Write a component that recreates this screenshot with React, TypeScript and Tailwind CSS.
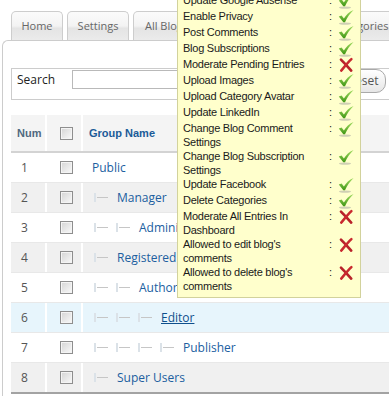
import React from "react";

interface Group {
  num: number;
  name: string;
  level: number;
  hover?: boolean;
}

interface Perm {
  lines: string[];
  allowed: boolean;
}

const groups: Group[] = [
  { num: 1, name: "Public", level: 0 },
  { num: 2, name: "Manager", level: 1 },
  { num: 3, name: "Administrator", level: 2 },
  { num: 4, name: "Registered", level: 1 },
  { num: 5, name: "Author", level: 2 },
  { num: 6, name: "Editor", level: 3, hover: true },
  { num: 7, name: "Publisher", level: 4 },
  { num: 8, name: "Super Users", level: 1 },
];

const perms: Perm[] = [
  { lines: ["Update Google Adsense"], allowed: true },
  { lines: ["Enable Privacy"], allowed: true },
  { lines: ["Post Comments"], allowed: true },
  { lines: ["Blog Subscriptions"], allowed: true },
  { lines: ["Moderate Pending Entries"], allowed: false },
  { lines: ["Upload Images"], allowed: true },
  { lines: ["Upload Category Avatar"], allowed: true },
  { lines: ["Update LinkedIn"], allowed: true },
  { lines: ["Change Blog Comment", "Settings"], allowed: true },
  { lines: ["Change Blog Subscription", "Settings"], allowed: true },
  { lines: ["Update Facebook"], allowed: true },
  { lines: ["Delete Categories"], allowed: true },
  { lines: ["Moderate All Entries In", "Dashboard"], allowed: false },
  { lines: ["Allowed to edit blog's", "comments"], allowed: false },
  { lines: ["Allowed to delete blog's", "comments"], allowed: false },
];

//////////

function CheckIcon() {
  return (
    <svg width="16" height="16" viewBox="0 0 16 16" className="overflow-visible">
      <defs>
        <linearGradient id="chk" x1="0" y1="0" x2="0" y2="1">
          <stop offset="0" stopColor="#a2dc62" />
          <stop offset="1" stopColor="#3f9614" />
        </linearGradient>
      </defs>
      <ellipse cx="7" cy="14.6" rx="6" ry="1.1" fill="#cfcfb4" />
      <path
        d="M0.8 7.6 L3.6 6.4 L5.9 9.4 C8.1 5.9 11.1 2.9 15.6 1 C12 4.3 9.2 8.5 7 13.3 L5.3 13.3 Z"
        fill="url(#chk)"
      />
    </svg>
  );
}

function CrossIcon() {
  return (
    <svg width="16" height="16" viewBox="0 0 16 16">
      <path
        d="M3 2.6 C6 5.5 9.5 9.6 13.2 13.6"
        stroke="#b8222a"
        strokeWidth="2.7"
        strokeLinecap="round"
        fill="none"
      />
      <path
        d="M13.4 2.2 C10 5.4 6.6 9.6 3.2 13.6"
        stroke="#c9292f"
        strokeWidth="2.5"
        strokeLinecap="round"
        fill="none"
      />
    </svg>
  );
}

//////////

function Checkbox() {
  return (
    <span className="block w-[13px] h-[13px] border border-[#8e8e8e] bg-gradient-to-br from-[#d4d4d4] to-[#fafafa] shadow-[inset_0_0_0_1px_#f4f4f4]" />
  );
}

function TreePrefix({ level }: { level: number }) {
  return (
    <>
      {Array.from({ length: level }).map((_, i) => (
        <span key={i} className="inline-flex items-center w-[22px] pl-[2px] shrink-0">
          <span className="w-[2px] h-[9px] bg-[#dbe2e8]" />
          <span className="ml-px w-[11px] h-px bg-[#c6c6c6]" />
        </span>
      ))}
    </>
  );
}

//////////

function Tabs() {
  return (
    <div className="flex gap-[4px] pl-[11px] pt-[11px] h-[40px] text-[11px] text-[#666] font-['Open_Sans',sans-serif]">
      <div className="w-[52px] flex items-center justify-center rounded-t-[5px] border border-b-0 border-[#cdcdcd] bg-[linear-gradient(#fbfbfb,#f3f3f3_50%,#e4e4e4_58%,#ebebeb)]">
        Home
      </div>
      <div className="w-[62px] flex items-center justify-center rounded-t-[5px] border border-b-0 border-[#cdcdcd] bg-[linear-gradient(#fbfbfb,#f3f3f3_50%,#e4e4e4_58%,#ebebeb)]">
        Settings
      </div>
      <div className="w-[184px] flex items-center pl-[11px] rounded-t-[5px] border border-b-0 border-[#cdcdcd] bg-[linear-gradient(#fbfbfb,#f3f3f3_50%,#e4e4e4_58%,#ebebeb)]">
        All Blog Entries
      </div>
      <div className="w-[100px] flex items-center pl-[12px] rounded-t-[5px] border border-b-0 border-[#cdcdcd] bg-[linear-gradient(#fbfbfb,#f3f3f3_50%,#e4e4e4_58%,#ebebeb)]">
        Categories
      </div>
    </div>
  );
}

function SearchBar() {
  return (
    <div className="flex items-start h-[32px] border border-[#cccccc] pr-[40px] font-['Open_Sans',sans-serif] text-[12px]">
      <span className="ml-[5px] mt-px leading-[20px] w-[55px] text-[#222]">Search</span>
      <span className="mt-px h-[19px] w-[266px] border border-[#b9b9b9] bg-white" />
      <span className="ml-[2px] h-[24px] w-[46px] flex items-center justify-center rounded-[10px] border border-[#a9a9a9] bg-gradient-to-b from-white to-[#e6e6e6] text-[#555]">
        Reset
      </span>
    </div>
  );
}

function GroupTable() {
  return (
    <div className="mt-[15px] font-['Open_Sans',sans-serif]">
      <div className="grid grid-cols-[34px_34px_1fr] gap-x-[2px] h-[38px] border-b-2 border-[#d3d3d3] font-['Liberation_Sans',Arial,sans-serif] text-[11px] font-bold">
        <div className="bg-[#f4f4f4] flex items-center pl-[6px] text-[#50687f]">Num</div>
        <div className="bg-[#f4f4f4] flex items-center pl-[13px]">
          <Checkbox />
        </div>
        <div className="bg-[#f4f4f4] flex items-center pl-[6px] text-[#1b5b98]">Group Name</div>
      </div>
      {groups.map((g, i) => {
        const last = i === groups.length - 1;
        const bg = g.hover ? "bg-[#e7f5fc]" : g.num % 2 === 0 ? "bg-[#f0f0f0]" : "bg-white";
        return (
          <div
            key={g.num}
            className={`grid grid-cols-[34px_34px_1fr] gap-x-[2px] ${
              last ? "h-[31px] border-b-2 border-[#a3a3a3]" : "h-[30px] border-b border-[#e8e8e8]"
            }`}
          >
            <div className={`${bg} flex items-center pl-[10px] text-[12px] text-[#555]`}>{g.num}</div>
            <div className={`${bg} flex items-center pl-[13px]`}>
              <Checkbox />
            </div>
            <div className={`${bg} flex items-center pl-[9px] text-[12px] whitespace-nowrap`}>
              <TreePrefix level={g.level} />
              <span
                className={`${g.level > 0 ? "ml-[3px]" : ""} ${
                  g.hover ? "underline text-[#0f4f8c]" : "text-[#205e9f]"
                }`}
              >
                {g.name}
              </span>
            </div>
          </div>
        );
      })}
    </div>
  );
}

function PermTooltip() {
  return (
    <div className="absolute left-[177px] top-[-12px] w-[184px] border border-[#d2d29c] bg-[#ffffcc] pl-[5px] pt-[4px] pb-[4px] font-['Liberation_Sans',Arial,sans-serif] text-[11px] tracking-[-0.25px] text-[#1a1a1a]">
      {perms.map((p, i) => (
        <div key={i} className="grid grid-cols-[145px_10px_16px] items-start">
          <div className="leading-[14px] whitespace-nowrap">
            {p.lines.map((l) => (
              <div key={l}>{l}</div>
            ))}
          </div>
          <div className="leading-[14px] pl-px">:</div>
          <div className="h-[16px]">{p.allowed ? <CheckIcon /> : <CrossIcon />}</div>
        </div>
      ))}
    </div>
  );
}

export default function App() {
  return (
    <div className="relative w-[389px] h-[396px] overflow-hidden bg-white">
      <div className="w-[640px]">
        <Tabs />
        <div className="ml-[2px] border-l border-t border-[#cccccc] rounded-tl-[6px] pt-[27px] pl-[8px] h-[360px]">
          <SearchBar />
          <GroupTable />
        </div>
      </div>
      <PermTooltip />
    </div>
  );
}
